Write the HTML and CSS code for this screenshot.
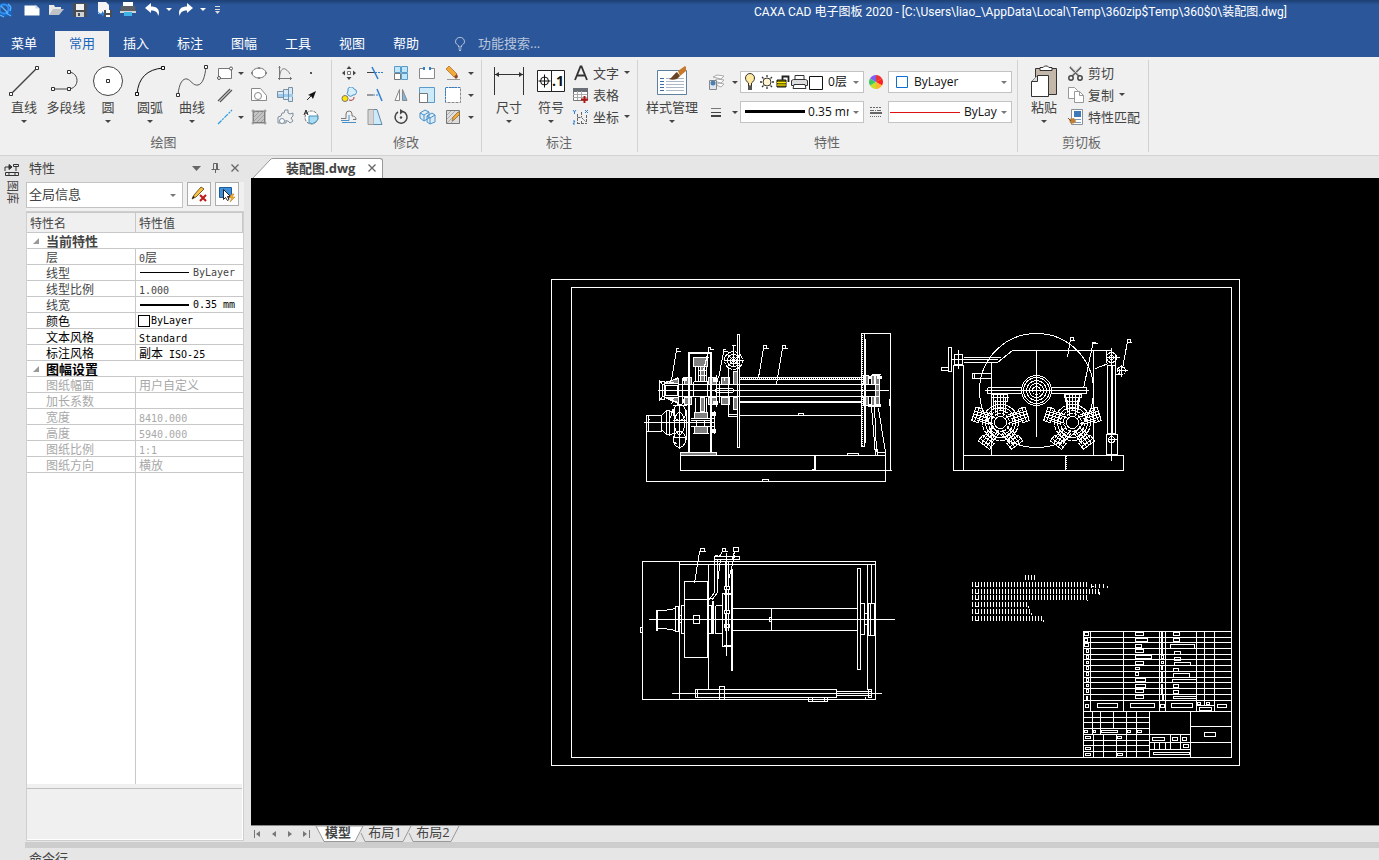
FILE: index.html
```html
<!DOCTYPE html>
<html lang="zh-CN">
<head>
  <meta charset="UTF-8">
  <title>CAXA CAD 电子图板 2020</title>
  <link rel="stylesheet" href="styles.css">
</head>
<body>

  <header class="header">
    <div class="titlebar">
      <svg class="logo" width="14" height="18" viewBox="0 0 14 18"><path d="M0 3l4-1 5 2 3 4-1 4 2 3-4-2-3 3-3-1-3-3z" fill="#1667c9"/><circle cx="4" cy="8" r="4.500" fill="#2b579a" stroke="#2f8fee" stroke-width="2"/><path d="M1 5l7 7M6 12l5 3M8 3l3 3M0 14l4 2M11 6l-1 4" stroke="#58b4ff" stroke-width="1.300"/></svg>
      <button class="qat" aria-label="新建"><svg width="16" height="14" viewBox="0 0 16 14"><path d="M.5 2.500h11l4 3v7H.5z" fill="#fff"/><path d="M11.500 1.500v4h4z" fill="#ccd3de"/></svg></button>
      <button class="qat" aria-label="打开"><svg width="16" height="14" viewBox="0 0 16 14"><path d="M1 12V2h5l1 2h6v3" fill="#e8e8e8"/><path d="M1 12l4-6h11l-5 6z" fill="#bfc3c8"/></svg></button>
      <button class="qat" aria-label="保存"><svg width="14" height="14" viewBox="0 0 14 14"><path d="M0 0h14v14H1l-1-1z" fill="#4a4d52"/><path d="M3 1h8v6H3z" fill="#f2f2f2"/><path d="M3 9h8v5H3z" fill="#d0d3d6"/><path d="M5 10h2v3H5z" fill="#4a4d52"/></svg></button>
      <button class="qat" aria-label="另存为"><svg width="15" height="15" viewBox="0 0 15 15"><path d="M1 0h8l3 3v9H1z" fill="#f4f4f4"/><path d="M0 8c2 3 3 4 5 3v-2l3 3-3 3v-2C2 13 1 11 0 8z" fill="#2b7cd3"/><path d="M7 8h8v7H7z" fill="#4a4d52"/><path d="M9 8h4v3H9zM9 13h4v2H9z" fill="#fff"/></svg></button>
      <button class="qat" aria-label="打印"><svg width="16" height="15" viewBox="0 0 16 15"><path d="M3 0h10v4H3z" fill="#fff"/><path d="M1 4h14l1 6H0z" fill="#5c5f64"/><path d="M0 9h16v2H0z" fill="#d5d5d5"/><path d="M4 10h8v4H4z" fill="#3fb4e6"/></svg></button>
      <button class="qat" aria-label="撤销"><svg width="14" height="13" viewBox="0 0 14 13"><path d="M0 5l6-5v3.500c5 0 8 2 8 6.500 0 1-.5 2-1 3 0-4-3-5.500-7-5.500V10z" fill="#fff"/></svg></button>
      <span class="caret light"></span>
      <button class="qat" aria-label="恢复"><svg width="14" height="13" viewBox="0 0 14 13"><path d="M14 5L8 0v3.500C3 3.500 0 5.500 0 10c0 1 .5 2 1 3 0-4 3-5.500 7-5.500V10z" fill="#fff"/></svg></button>
      <span class="caret light"></span>
      <button class="qat more" aria-label="自定义"><svg width="7" height="8" viewBox="0 0 7 8"><path d="M1 .5h5M1 3.500h5" stroke="#ddd"/><path d="M1 5h5L3.500 8z" fill="#ddd"/></svg></button>
      <div class="title">CAXA CAD 电子图板 2020 - [C:\Users\liao_\AppData\Local\Temp\360zip$Temp\360$0\装配图.dwg]</div>
    </div>
    <nav class="tabs">
      <button class="tab menu">菜单</button>
      <button class="tab active">常用</button>
      <button class="tab">插入</button>
      <button class="tab">标注</button>
      <button class="tab">图幅</button>
      <button class="tab">工具</button>
      <button class="tab">视图</button>
      <button class="tab">帮助</button>
      <label class="search">
        <svg width="10" height="14" viewBox="0 0 10 14" fill="none" stroke="#b9c6dc"><path d="M3.500 10V8.500C2 7.500.5 6.500.5 4.800a4.300 4.300 0 0 1 9 0C9.500 6.500 8 7.500 6.500 8.500V10z"/><path d="M3.500 12h3M4 13.500h2"/></svg>
        <input type="text" placeholder="功能搜索..." aria-label="功能搜索">
      </label>
    </nav>
  </header>

  <div class="ribbon">
    <section class="group draw">
      <div class="tools">
        <button class="big"><svg width="32" height="34" viewBox="0 0 32 34"><path d="M3 30L29 4" stroke="#444" stroke-width="1.500"/><path d="M1.500 28.500h3v3h-3zM27.500 2.500h3v3h-3z" fill="#fff" stroke="#333"/></svg>直线<span class="caret"></span></button>
        <button class="big"><svg width="32" height="34" viewBox="0 0 32 34"><path d="M3 25h15c12 0 12-17 0-17" fill="none" stroke="#444"/><path d="M1.500 23.500h3v3h-3zM17.500 23.500h3v3h-3zM17.500 6.500h3v3h-3z" fill="#fff" stroke="#333"/></svg>多段线</button>
        <button class="big"><svg width="32" height="34" viewBox="0 0 32 34"><circle cx="16" cy="17" r="14.500" fill="#fff" stroke="#444"/><path d="M14.500 15.500h3v3h-3z" fill="#fff" stroke="#333"/></svg>圆<span class="caret"></span></button>
        <button class="big"><svg width="32" height="34" viewBox="0 0 32 34"><path d="M3 30Q5 6 29 4" fill="none" stroke="#111"/><path d="M1.500 28.500h3v3h-3zM27.500 2.500h3v3h-3z" fill="#fff" stroke="#111"/></svg>圆弧<span class="caret"></span></button>
        <button class="big"><svg width="32" height="34" viewBox="0 0 32 34"><path d="M2 31C3 19 7 14 11 15s6 7 11 6 7-9 8-18" fill="none" stroke="#555"/><path d="M.5 29.500h3v3h-3zM28.500 1.500h3v3h-3z" fill="#fff" stroke="#333"/></svg>曲线<span class="caret"></span></button>
        <div class="small-grid">
          <button class="ico" aria-label="矩形"><svg width="16" height="16" viewBox="0 0 16 16"><path d="M1.500 3.500h13v10h-13z" fill="#fff" stroke="#777"/><circle cx="14" cy="3.500" r="1.500" fill="#fff" stroke="#555"/><circle cx="2" cy="13" r="1.500" fill="#fff" stroke="#555"/></svg></button><span class="caret"></span>
          <button class="ico" aria-label="椭圆"><svg width="16" height="16" viewBox="0 0 16 16"><ellipse cx="8" cy="8" rx="7" ry="5" fill="#fff" stroke="#777"/><path d="M7 2h2v2H7zM7 12h2v2H7zM0 7h2v2H0zM14 7h2v2h-2z" fill="#888"/></svg></button>
          <button class="ico" aria-label="公式曲线"><svg width="16" height="16" viewBox="0 0 16 16"><path d="M2.500 1v14M1 13.500h14M2.500 13C3 2 8 1 13 9M1.500 2.500h2M13.500 12v3" fill="none" stroke="#777"/></svg></button>
          <button class="ico" aria-label="点"><svg width="16" height="16" viewBox="0 0 16 16"><path d="M7 7h2v2H7z" fill="#555"/></svg></button>

          <button class="ico" aria-label="平行线"><svg width="16" height="16" viewBox="0 0 16 16"><path d="M1 14L13 2M3 15L15 3" stroke="#555" stroke-width="1.300"/></svg></button><span></span>
          <button class="ico" aria-label="多边形"><svg width="16" height="16" viewBox="0 0 16 16"><path d="M.5 1.500h9l6 7v5H.5z" fill="#fff" stroke="#888"/><circle cx="7" cy="9" r="3.500" fill="#fff" stroke="#888"/></svg></button>
          <button class="ico" aria-label="孔轴"><svg width="17" height="16" viewBox="0 0 17 16"><path d="M.5 4.500h6v-2h5v-2h4v14h-4v-2h-5v-2h-6z" fill="#d4eafa" stroke="#7a8f9f"/><path d="M1 7h15v3H1z" fill="#9ccbee"/><path d="M6.500 3v9M11.500 2v12" stroke="#7a8f9f"/></svg></button>
          <button class="ico" aria-label="箭头"><svg width="16" height="16" viewBox="0 0 16 16"><path d="M4 13l5-5" stroke="#222"/><path d="M13 4l-3 8-2-3-3-1z" fill="#111"/></svg></button>

          <button class="ico" aria-label="中心线"><svg width="16" height="16" viewBox="0 0 16 16"><path d="M1 15L15 1" stroke="#2f9fe0" stroke-width="1.300" stroke-dasharray="5 1 2 1"/></svg></button><span class="caret"></span>
          <button class="ico" aria-label="填充"><svg width="16" height="16" viewBox="0 0 16 16"><path d="M2.500 2.500h11v11h-11z" fill="#c4c4c4" stroke="#777"/><path d="M2 5l3-3M2 9l7-7M2 13L13 2M6 13l7-7M10 13l3-3" stroke="#a0a0a0"/><path d="M.5 2h15M.5 14h15M2 .5v15M14 .5v15" stroke="#888"/></svg></button>
          <button class="ico" aria-label="齿轮"><svg width="17" height="16" viewBox="0 0 17 16"><path d="M5 4h2l1-3h3v3l2 1 3-1v3l-2 2 2 3-3 2-2-2H9M5 4L4 7 1 8v6h8v-3" fill="none" stroke="#7f8f9f"/><circle cx="5" cy="12" r="2.500" fill="#fff" stroke="#7f8f9f"/></svg></button>
          <button class="ico" aria-label="文字圆"><svg width="16" height="16" viewBox="0 0 16 16"><circle cx="8.500" cy="8.500" r="6.500" fill="#fff" stroke="#777" stroke-dasharray="3 1"/><path d="M6 7h9a6.500 6.500 0 0 1-9 7z" fill="#a9dcf5" stroke="#4a90b8"/><path d="M1 6l2-5 2 5M2 4h2" fill="none" stroke="#222"/></svg></button>
        </div>
      </div>
      <h2>绘图</h2>
    </section>

    <section class="group modify">
      <div class="tools">
        <div class="small-grid">
          <button class="ico" aria-label="平移"><svg width="16" height="16" viewBox="0 0 16 16"><path d="M8 1l2.500 3h-5zM8 15l2.500-3h-5zM1 8l3-2.500v5zM15 8l-3-2.500v5z" fill="#444"/><path d="M6.500 6.500h3v3h-3z" fill="#fff" stroke="#777"/></svg></button>
          <button class="ico" aria-label="裁剪"><svg width="16" height="16" viewBox="0 0 16 16"><path d="M0 7.500h8" stroke="#444"/><path d="M8 7.500h8" stroke="#2f7fd0" stroke-dasharray="2 1"/><path d="M5 2l6 12" stroke="#2f7fd0" stroke-width="1.500"/></svg></button>
          <button class="ico" aria-label="阵列"><svg width="16" height="16" viewBox="0 0 16 16"><path d="M1.500 1.500h6v6h-6zM8.500 1.500h6v6h-6zM8.500 8.500h6v6h-6z" fill="#bfe6fa" stroke="#5a9cc8"/><path d="M1.500 8.500h6v6h-6z" fill="#fff" stroke="#777"/></svg></button>
          <button class="ico" aria-label="打断"><svg width="16" height="16" viewBox="0 0 16 16"><path d="M5 3.500H.5v10h15v-10H11" fill="#fff" stroke="#888"/><path d="M4 2h2v3H4zM10 2h2v3h-2z" fill="#2f7fd0"/></svg></button>
          <button class="ico" aria-label="删除"><svg width="16" height="16" viewBox="0 0 16 16"><path d="M1 4l3-3 8 8-3 3z" fill="#f2a93b" stroke="#a8661a" stroke-width=".7"/><path d="M9 12l3-3 1 3-2 2z" fill="#8a4a2a"/><path d="M2 14.500h13" stroke="#999"/></svg></button>
          <span class="caret"></span>

          <button class="ico" aria-label="平移复制"><svg width="16" height="16" viewBox="0 0 16 16"><circle cx="4" cy="11.500" r="3" fill="#ffe600" stroke="#777"/><path d="M7 4a3 3 0 0 1 6-2 3 3 0 0 1-1 6 3 3 0 0 1-5-4z" fill="#d5effc" stroke="#4a90c8"/><path d="M8 13c3 1 5 0 5-3" fill="none" stroke="#a33"/></svg></button>
          <button class="ico" aria-label="延伸"><svg width="16" height="16" viewBox="0 0 16 16"><path d="M0 8h6" stroke="#444"/><path d="M6 8h6" stroke="#2f7fd0" stroke-dasharray="2 1"/><path d="M10 2l5 12" stroke="#2f7fd0" stroke-width="1.500"/></svg></button>
          <button class="ico" aria-label="镜像"><svg width="16" height="16" viewBox="0 0 16 16"><path d="M6.500 2.500v11h-4.500z" fill="#fff" stroke="#888"/><path d="M9.500 2.500v11h4.500z" fill="#7fb8e0" stroke="#888"/></svg></button>
          <button class="ico" aria-label="缩放"><svg width="16" height="16" viewBox="0 0 16 16"><path d="M.5.5h15v15H.5z" fill="#cdeafa" stroke="#5a9cc8"/><path d="M.5 6.500h8v9h-8z" fill="#fff" stroke="#777"/></svg></button>
          <button class="ico" aria-label="拉伸"><svg width="16" height="16" viewBox="0 0 16 16"><path d="M.5.5h15v15H.5z" fill="#fff" stroke="#888" stroke-dasharray="3 1"/><path d="M.5 15V.5h15" fill="none" stroke="#2f7fd0" stroke-dasharray="2 1"/></svg></button>
          <span class="caret"></span>

          <button class="ico" aria-label="等距线"><svg width="16" height="16" viewBox="0 0 16 16"><path d="M0 9.500h5V5a3 3 0 0 1 6 0v2c2 0 4 1 4 3v.5h-3" fill="none" stroke="#777"/><path d="M1 13.500h14M0 11.500h8V6" fill="none" stroke="#4a90c8"/></svg></button>
          <button class="ico" aria-label="拉长"><svg width="16" height="16" viewBox="0 0 16 16"><path d="M1 .5h6v15H1z" fill="#d5d5d5" stroke="#999"/><path d="M7 .5h3l5 15H7" fill="#cdeafa" stroke="#5f88a8"/></svg></button>
          <button class="ico" aria-label="旋转"><svg width="16" height="16" viewBox="0 0 16 16"><path d="M10 2.500A6 6 0 1 1 5 3" fill="none" stroke="#444" stroke-width="1.500"/><path d="M7 0l4 2.500-4 3z" fill="#444"/><circle cx="8" cy="8.500" r="1.200" fill="#444"/></svg></button>
          <button class="ico" aria-label="分解"><svg width="17" height="16" viewBox="0 0 17 16"><path d="M1 4l5-3 4 2v6l-5 3-4-3zM1 4l4 2 5-3M5 6v6M8 7l5-3 3 2v7l-5 2-3-2zM8 7l3 2 5-3M11 9v6" fill="#cdeafa" fill-opacity=".6" stroke="#4a90c8"/></svg></button>
          <button class="ico" aria-label="编辑填充"><svg width="16" height="16" viewBox="0 0 16 16"><path d="M1.500 1.500h13v13h-13z" fill="#ddd" stroke="#777"/><path d="M2 6l4-4M2 10l8-8M2 14L14 2M6 14l8-8" stroke="#aaa"/><path d="M7 12l1-4 5-5 2 2-5 5z" fill="#f2a93b" stroke="#8a5a1a" stroke-width=".6"/></svg></button>
          <span class="caret"></span>
        </div>
      </div>
      <h2>修改</h2>
    </section>

    <section class="group annotate">
      <div class="tools">
        <button class="big"><svg width="32" height="34" viewBox="0 0 32 34"><path d="M1.500 3v28M30.500 3v28M2 10.500h28" stroke="#333"/><path d="M2 10.500l4-2.500v5zM30 10.500L26 8v5z" fill="#333"/></svg>尺寸<span class="caret"></span></button>
        <button class="big"><svg width="30" height="34" viewBox="0 0 30 34"><path d="M1.500 6.500h27v21h-27zM15.500 6v21" fill="#fff" stroke="#222"/><circle cx="8.500" cy="17" r="4" fill="none" stroke="#111"/><path d="M8.500 10.500v13M2.500 17h12" stroke="#111"/><text x="16" y="22" class="sym">.1</text></svg>符号<span class="caret"></span></button>
        <div class="list">
          <button class="row"><svg width="18" height="16" viewBox="0 0 18 16"><path d="M3 15L8.500 1.500h1L15 15M5 10.500h8" fill="none" stroke="#333" stroke-width="1.800"/></svg>文字<span class="caret"></span></button>
          <button class="row"><svg width="18" height="16" viewBox="0 0 18 16"><path d="M1.500 1.500h14v12h-14z" fill="#fff" stroke="#777"/><path d="M1 1h15v4H1z" fill="#6a6f76"/><path d="M1 7.500h14M1 10.500h14M5.500 4v9M9.500 4v9" stroke="#aaa"/><path d="M12.500 9v7M9 12.500h7" stroke="#b01818" stroke-width="2"/></svg>表格</button>
          <button class="row"><svg width="18" height="16" viewBox="0 0 18 16"><path d="M5.500 5v10M5.500 8.500h4l4 4M9.500 3v5M5 14.500h10M14.500 6v8M9.500 12v3" fill="none" stroke="#666" stroke-dasharray="3 1"/><path d="M1 1l1.500 2L4 1M2.500 3v2M13 1l3 3m0-3l-3 3M1 12h2l-2 3h2" fill="none" stroke="#2f7fd0"/></svg>坐标<span class="caret"></span></button>
        </div>
      </div>
      <h2>标注</h2>
    </section>

    <section class="group props">
      <div class="tools">
        <button class="big wide"><svg width="32" height="34" viewBox="0 0 32 34"><path d="M1.500 6.500h29v24h-29z" fill="#fff" stroke="#5f7f9f"/><path d="M4 14.500h4M4 17.500h4M4 20.500h4M4 23.500h4M4 26.500h4" stroke="#3a6ea5"/><path d="M10 14.500h18M10 17.500h18M10 20.500h18M10 23.500h18M10 26.500h18" stroke="#aab8c8"/><path d="M22 7l7-5 1 1v4l-6 5z" fill="#c67a2a"/><path d="M21 8l3 4-3 3c-3 1-6 1-8 0 3-1 4-4 8-7z" fill="#6b4226"/></svg>样式管理<span class="caret"></span></button>
        <div class="prop-grid">
          <button class="ico" aria-label="图层"><svg width="17" height="16" viewBox="0 0 17 16"><path d="M5 3l4-2 7 1-3 3zM6 7l3-2 7 1-3 3zM8 11l3-2 5 1-3 3z" fill="#fff" stroke="#aaa"/><path d="M1.500 6.500h7v9h-7z" fill="#dde6ee" stroke="#888"/><circle cx="5" cy="9" r="2.500" fill="#4a7fb0"/></svg></button>
          <span class="caret"></span>
          <div class="combo">
            <svg width="84" height="20" viewBox="0 0 84 20">
              <path d="M7.500 14v-3C5.500 9.500 4.500 8 4.500 6a4.500 4.500 0 0 1 9 0c0 2-1 3.500-3 5v3z" fill="#ffe9a0" stroke="#333"/><path d="M7 14h4v4H7z" fill="#555"/>
              <circle cx="26" cy="10" r="4" fill="#fff3d0" stroke="#333"/><path d="M26 3v2M26 15v2M19 10h2M31 10h2M21 5l1.500 1.500M29.500 13.500L31 15M31 5l-1.500 1.500M22.500 13.500L21 15" stroke="#333" stroke-width="1.300"/>
              <path d="M36 8h9v7h-9z" fill="#777000" stroke="#111"/><path d="M41.500 8V4.500h6V10" fill="none" stroke="#222" stroke-width="1.800"/><path d="M36 10.500h9M36 13h9" stroke="#ffe600"/>
              <path d="M54 3.500h9v4h-9z" fill="#fff" stroke="#333"/><path d="M50.500 8.500l2-1h12l2 1v5h-16z" fill="#ddd" stroke="#333"/><path d="M53 12.500h11l1 4H52z" fill="#fff" stroke="#333"/>
              <path d="M68.500 4.500h13v13h-13z" fill="#fff" stroke="#111"/>
            </svg>
            <select aria-label="图层"><option>0层</option></select><span class="caret"></span>
          </div>
          <svg class="mid" width="14" height="14" viewBox="-7 -7 14 14"><path d="M0 0L0-7A7 7 0 0 1 6-3.500z" fill="#e33"/><path d="M0 0L6-3.500A7 7 0 0 1 6 3.500z" fill="#f22"/><path d="M0 0L6 3.500A7 7 0 0 1 0 7z" fill="#ffb52e"/><path d="M0 0V7A7 7 0 0 1-6 3.500z" fill="#c8e02a"/><path d="M0 0L-6 3.500A7 7 0 0 1-6-3.500z" fill="#3fc860"/><path d="M0 0L-6-3.500A7 7 0 0 1 0-7z" fill="#8060f0"/></svg>
          <div class="combo">
            <svg width="22" height="20" viewBox="0 0 22 20"><path d="M7.500 4.500h11v11h-11z" fill="#fff" stroke="#0a6fd0"/></svg>
            <select aria-label="颜色"><option>ByLayer</option></select><span class="caret"></span>
          </div>

          <button class="ico" aria-label="线宽"><svg width="16" height="16" viewBox="0 0 16 16"><path d="M3 4.500h10" stroke="#777"/><path d="M3 8.500h10" stroke="#444"/><path d="M3 12h10" stroke="#444" stroke-width="2"/></svg></button>
          <span class="caret"></span>
          <div class="combo">
            <svg width="64" height="20" viewBox="0 0 64 20"><path d="M4 9.500h60" stroke="#000" stroke-width="3"/></svg>
            <select aria-label="线宽"><option>0.35 mm</option></select><span class="caret"></span>
          </div>
          <svg class="mid" width="14" height="14" viewBox="0 0 14 14" stroke="#666"><path d="M1 2.500h12" stroke-dasharray="2 1"/><path d="M1 5.500h12" stroke-dasharray="4 1 1 1"/><path d="M1 8h12" stroke-width="2"/><path d="M1 11.500h12" stroke-dasharray="1 1"/></svg>
          <div class="combo">
            <svg width="72" height="20" viewBox="0 0 72 20"><path d="M1 10.500h70" stroke="#e01010"/></svg>
            <select aria-label="线型"><option>ByLayer</option></select><span class="caret"></span>
          </div>
        </div>
      </div>
      <h2>特性</h2>
    </section>

    <section class="group clip">
      <div class="tools">
        <button class="big"><svg width="28" height="34" viewBox="0 0 28 34"><path d="M5.500 4.500h21v26h-21z" fill="#c2b7a8" stroke="#333"/><path d="M10 6.500v-3h3c1-2 5-2 6 0h3v3z" fill="#fff" stroke="#333"/><path d="M1.500 17.500l6-6h11v21h-17z" fill="#fff" stroke="#333"/><path d="M1.500 17.500h6v-6" fill="#ddd" stroke="#333"/></svg>粘贴<span class="caret"></span></button>
        <div class="list">
          <button class="row"><svg width="18" height="16" viewBox="0 0 18 16"><path d="M3 2l9 9M14 2l-9 9" stroke="#666" stroke-width="2"/><path d="M4 2l8 8M13 2l-8 8" stroke="#eee" stroke-width=".6"/><circle cx="4" cy="13" r="2.200" fill="none" stroke="#444" stroke-width="1.500"/><circle cx="13" cy="13" r="2.200" fill="none" stroke="#444" stroke-width="1.500"/></svg>剪切</button>
          <button class="row"><svg width="18" height="16" viewBox="0 0 18 16"><path d="M1.500.5h6l3 3v8h-9z" fill="#fff" stroke="#999"/><path d="M7.500 4.500h5l4 4v7h-9z" fill="#fff" stroke="#999"/><path d="M12.500 4.500v4h4" fill="none" stroke="#999"/></svg>复制<span class="caret"></span></button>
          <button class="row"><svg width="18" height="16" viewBox="0 0 18 16"><path d="M4.500.5h11v15h-11z" fill="#fff" stroke="#8a9099"/><path d="M7 2h7v6H7z" fill="#3f7ab8"/><path d="M8 10.500h6M8 13.500h6" stroke="#7a9abf"/><path d="M2 10l5-1 2 3c-1 3-4 3-6 2z" fill="#c08038"/><path d="M1 9l3 3" stroke="#653"/></svg>特性匹配</button>
        </div>
      </div>
      <h2>剪切板</h2>
    </section>
  </div>

  <div class="workspace">
    <aside class="rail">
      <button class="rail-tab">
        <svg width="16" height="14" viewBox="0 0 16 14" fill="none" stroke="#333"><path d="M1 8V4h5"/><path d="M5 1.500v5L8 4z" fill="#333"/><path d="M9.500 1.500h5v2h-5zM12 4v4"/><path d="M1.500 9.500h13v3h-13zM4 11h2M10 11h2"/></svg>
        <span>图库</span>
      </button>
    </aside>

    <div class="main">
      <div class="panes">
        <aside class="panel">
          <div class="panel-head">
            <span class="name">特性</span>
            <button aria-label="菜单"><svg width="9" height="6" viewBox="0 0 9 6"><path d="M0 1h9L4.500 6z" fill="#666"/></svg></button>
            <button aria-label="固定"><svg width="9" height="10" viewBox="0 0 9 10" fill="none" stroke="#666"><path d="M2.500 6V.5h4V6M5.500 1v5M.5 6.500h8M4.500 7v3"/></svg></button>
            <button aria-label="关闭"><svg width="8" height="8" viewBox="0 0 8 8"><path d="M.5.5l7 7M7.500.5l-7 7" stroke="#666" stroke-width="1.300"/></svg></button>
          </div>
          <div class="panel-pick">
            <div class="combo">
              <select aria-label="对象"><option>全局信息</option></select><span class="caret"></span>
            </div>
            <button class="sq" aria-label="清除"><svg width="16" height="16" viewBox="0 0 16 16"><path d="M1 13l2-4 7-8 3 2-8 8z" fill="#f6c445" stroke="#5a3a10" stroke-width=".8"/><path d="M1 13l1-3 2 1z" fill="#222"/><path d="M9 9l6 6M15 9l-6 6" stroke="#c01818" stroke-width="2"/></svg></button>
            <button class="sq" aria-label="快速选择"><svg width="16" height="16" viewBox="0 0 16 16"><path d="M.5 1.500h12v10H.5z" fill="#3f8fd8" stroke="#1d5c9c"/><path d="M4.500 3.500v10l2-2 2 3 1.500-1-1.500-3h3z" fill="#fff" stroke="#222"/><path d="M13 8l-3 4h3l-2 4 5-5h-3l2-3z" fill="#ffb52e" stroke="#b56a00" stroke-width=".5"/></svg></button>
          </div>
          <div class="sheet">
            <table>
              <thead><tr><th>特性名</th><th>特性值</th></tr></thead>
              <tbody>
                <tr class="cat"><td colspan="2"><span class="fold"></span>当前特性</td></tr>
                <tr><td>层</td><td><span class="lat">0</span>层</td></tr>
                <tr><td>线型</td><td><div class="line-value"><i class="thin"></i><span class="lat">ByLayer</span></div></td></tr>
                <tr><td>线型比例</td><td><span class="lat">1.000</span></td></tr>
                <tr><td>线宽</td><td class="on"><div class="line-value"><i class="thick"></i><span class="lat">0.35 mm</span></div></td></tr>
                <tr class="on"><td>颜色</td><td><div class="color-value"><i></i><span class="lat">ByLayer</span></div></td></tr>
                <tr class="on"><td>文本风格</td><td><span class="lat">Standard</span></td></tr>
                <tr class="on"><td>标注风格</td><td>副本<span class="lat"> ISO-25</span></td></tr>
                <tr class="cat on"><td colspan="2"><span class="fold"></span>图幅设置</td></tr>
                <tr class="off"><td>图纸幅面</td><td>用户自定义</td></tr>
                <tr class="off"><td>加长系数</td><td></td></tr>
                <tr class="off"><td>宽度</td><td><span class="lat">8410.000</span></td></tr>
                <tr class="off"><td>高度</td><td><span class="lat">5940.000</span></td></tr>
                <tr class="off"><td>图纸比例</td><td><span class="lat">1:1</span></td></tr>
                <tr class="off"><td>图纸方向</td><td>横放</td></tr>
              </tbody>
            </table>
            <div class="blank"></div>
            <div class="hint"></div>
          </div>
        </aside>

        <main class="doc">
          <div class="doc-tabs">
            <svg width="20" height="20" viewBox="0 0 20 20"><path d="M0 20L17 2Q18 .5 20 .5V20z" fill="#fff"/><path d="M0 20L17 2Q18 .5 20 .5" fill="none" stroke="#999"/></svg>
            <div class="doc-tab"><span>装配图.dwg</span><button aria-label="关闭文档"><svg width="8" height="8" viewBox="0 0 8 8"><path d="M.5.5l7 7M7.500.5l-7 7" stroke="#666" stroke-width="1.300"/></svg></button></div>
          </div>

          <div class="canvas">
            <svg viewBox="251 178 1128 647">
              <defs>
                <pattern id="hatch" width="2" height="2" patternUnits="userSpaceOnUse"><path d="M0 0h1v1H0zM1 1h1v1H1z" fill="#fff" stroke="none"/></pattern>
                <!-- one cylinder of the radial motor, pointing up -->
                <g id="arm"><path d="M-5-10v-13M5-10v-13M-7-21h14v-7H-7zM-3-7v-21M0-12v-16M3-7v-21M-6-14h12M-5-18h10M-8-25h16"/></g>
                <g id="motor"><circle r="18" stroke-dasharray="5 1"/><circle r="15"/><circle r="12" stroke-dasharray="4 1"/><circle r="9" stroke-dasharray="3 1"/><circle r="6"/>
                  <use href="#arm"/><use href="#arm" transform="rotate(72)"/><use href="#arm" transform="rotate(144)"/><use href="#arm" transform="rotate(216)"/><use href="#arm" transform="rotate(288)"/></g>
              </defs>
              <g transform="translate(.5 .5)" fill="none" stroke="#fff" shape-rendering="crispEdges">
                <!-- sheet frame -->
                <path d="M551 279h688v486H551zM571 287h660v470H571z"/>

                <!-- front view: base and dimensions -->
                <path d="M680 455h205v15H680zM885 470h6M646 422v59h239V452M762 481v-2h6v2M890 470V333h-29M889 398v7M847 455v-2h11v2M814 455v15h1V455M811 469h3"/>
                <path d="M680 452h36v3h-36z" fill="url(#hatch)"/>
                <!-- drum and shaft -->
                <path d="M737 334h2v113h-2zM861 333h3v113h-3zM865 338v104M739 377h122M739 379h122M739 401h122M739 402h122M739 415h122M798 415v-2h5v2M678 384h201M678 396h201M657 390h231"/>
                <path d="M740 378h121" stroke-dasharray="1 1"/>
                <path d="M862 334v111" stroke-dasharray="1 1"/>
                <path d="M728 366v50h9M728 414h9"/>
                <rect x="715" y="388" width="18" height="4" rx="2"/>
                <!-- housing -->
                <path d="M688 452V352h23v100M689 452V353h21v99"/>
                <g fill="url(#hatch)">
                  <path d="M693 357h14v9h-14zM700 366h4v15h-4zM700 397h4v14h-4zM694 412h13v6h-13zM694 426h13v7h-13zM693 381h14M693 396h14"/>
                  <path d="M684 377h7v7h-7zM684 397h7v7h-7zM708 377h8v7h-8zM708 397h8v7h-8zM721 377h8v7h-8zM721 397h8v7h-8zM733 371h4v13h-4zM733 397h4v12h-4z"/>
                  <path d="M863 375h5v9h-5zM863 396h5v9h-5zM871 375h3v9h-3zM871 396h3v9h-3zM875 375h4v30h-4z"/>
                </g>
                <path d="M695 365v16M706 365v16M695 397v15M706 397v15M693 381v15M707 381v15M692 357h16M692 433h16M698 366v15M698 370h8M698 375h8M696 419v6M704 419v6"/>
                <path d="M683 377h3v3h-3zM713 378h4v3h-4zM713 401h4v3h-4zM868 376h3v2h-3zM868 404h3v2h-3zM877 376h4v2h-4zM876 404h4v2h-4zM711 412h4v3h-4zM711 429h4v3h-4z" fill="#fff"/>
                <path d="M711 408v26M714 410v23M716 374v32M719 380v22M724 376v4M871 374h9M871 406h9"/>
                <!-- coupling -->
                <path d="M659 380v20M660 381h4v18h-4M662 384l16-7M662 396l16 7M662 384v12M665 385h12v10h-12zM678 377v26M682 377v26M659 380l3 4M659 400l3-4M669 382l8 1M669 398l8-1M665 390h13"/>
                <path d="M664 382l14-4v5h-14zM664 397h14v5z" fill="url(#hatch)"/>
                <!-- drive motor -->
                <path d="M643 422h71M646 415h15v16h-15zM648 415v16M649 419h-2M661 415l5-5v24l-5-5M666 410h3v24h-3zM669 410l5 3v19l-5 3M674 408v28M690 418h23M690 426h23M690 420h20"/>
                <ellipse cx="679" cy="412" rx="6" ry="8"/><ellipse cx="679" cy="439" rx="6" ry="8"/><ellipse cx="679" cy="423" rx="5" ry="11"/>
                <path d="M672 405h14M679 404v44M672 437h14M672 420h14M672 409l-2 9M686 409v30M671 404l2-7M684 404l-2-7M673 441l4 3"/>
                <!-- brake pulley -->
                <circle cx="733" cy="360" r="9" stroke-dasharray="3 1"/><circle cx="733" cy="360" r="6"/><circle cx="733" cy="360" r="3"/>
                <path d="M733 344v22M727 354l12 12M739 354l-12 12M731 345h4M724 360h19"/>
                <!-- right stand -->
                <path d="M871 406l4 49M874 406l2 46M878 408l7 44M876 452h9M873 449h4v6"/>
                <!-- leaders -->
                <path d="M671 380l5-30M676 351v-3h2M675 351h5M703 370l5-20M708 350v-3h2v2h3M718 378l5-26M723 352v-3h2M723 351h4M758 377l5-29v-3h3v3M762 348h6M776 384l6-36v-3h3v3M781 348h6"/>

                <!-- side view -->
                <circle cx="1036" cy="390" r="57"/>
                <circle cx="1036" cy="390" r="15"/><circle cx="1036" cy="390" r="13"/><circle cx="1036" cy="390" r="10"/><circle cx="1036" cy="390" r="7"/><circle cx="1036" cy="390" r="4"/>
                <path d="M1036 350v86M984 390h104M987 387h34v6h-34M987 387v6M1051 387h35v6h-35M991 455V362h-28M991 362h6l15-12h99M963 357h37M963 359h34M1093 350v105"/>
                <path d="M948 347h3v24h-3zM941 367h7v3h-7zM954 354h8v10h-8zM958 349v19M951 359h12M953 365h10v105h-10zM963 455h160v15H963M972 373h19v5h-19zM974 373v5M1065 455v15M1063 470h3"/>
                <path d="M1066 455v15" stroke-dasharray="1 1"/>
                <path d="M991 394h16v3h-16zM1064 394h17v3h-17zM993 397v12M1005 397v12M1066 397v12M1078 397v12"/>
                <use href="#motor" x="1000" y="422"/><use href="#motor" x="1072" y="422"/>
                <path d="M1107 365h8v68h-8zM1112 365v68M1106 434h11v20h-11zM1104 455h15M1111 347v113M1106 350v12M1115 355v10M1105 357h14M1095 368l13-5M1115 374h4v-6"/>
                <circle cx="1111" cy="357" r="5"/><circle cx="1111" cy="357" r="2"/><circle cx="1111" cy="439" r="3"/><circle cx="1121" cy="370" r="4"/>
                <path d="M1121 364v12M1116 370h11M1107 439h9"/>
                <path d="M1067 357l3-18v-2h3v3M1069 340h5M1083 388l9-43v-3h3M1091 343h6M1122 368l5-27v-2h3v3M1126 342h5"/>

                <!-- plan view -->
                <path d="M642 561h233v138H642zM679 561v138M679 564h196M708 564v125M867 564v125M871 564v39M642 627h-2v5h2"/>
                <path d="M684 581h23v76h-23zM684 599h23M693 615h6v8h-6zM648 619h246"/>
                <path d="M656 609v21M657 609v21M657 610h7l11-2M657 628h7l11 2M675 606h3v25h-3zM678 615h3M678 622h3M681 605h3v28h-3zM707 605h4v28h-4zM712 600v33M713 600v33M715 605h7v28h-7M715 605v28M722 593h10v53h-10zM723 645h8M723 594h8M726 552v103"/>
                <path d="M724 586h5v3h-5zM724 610h5v3h-5zM724 624h5v3h-5zM725 560v26M728 560v26M725 589v21M728 589v21M725 613v17M728 613v17"/>
                <path d="M731 568v102M732 568v102M732 608h125M732 630h125M771 608v22M771 617h-2v4h2M857 568h3v101h-3zM860 603h4v31h-4M864 613h4M864 624h4M868 603h6v32h-6zM870 603v32"/>
                <path d="M714 556h25v3h-25zM714 555h3M714 556v36l-6 8M717 559v33l-6 8M720 559l-3 23M709 598h4"/>
                <path d="M695 689h141v8H695zM697 689v8M671 693h210M719 686h5v13h-5zM836 691h34M836 695h34M868 689h3v8h-3zM865 696v3M808 697h19v4h-19zM812 697v4M824 697v4"/>
                <path d="M694 583l5-32M700 551v-3h4v3M698 551h7M719 556l3-5M722 551v-3h3v3M721 551h6M732 559l2-8M733 547h5v4h-5zM728 580l6-25"/>

                <!-- technical notes -->
                <g transform="translate(-.5 0)" stroke-width="5" stroke-dasharray="1 2">
                  <path d="M1025 577h10M972 584h116M972 591h127M972 597h115M972 604h56M972 611h59M972 618h70"/>
                </g>
                <path d="M1090 586h3M1091 583v4M1095 583v4M1099 583v4M1103 583v4M1107 585v2M1099 591v3M1087 599v1M1028 605v2M1031 612v2M1043 619v2M975 586h2M975 593h2M975 599h2M975 606h2M975 613h2M975 620h2"/>

                <!-- title block -->
                <path d="M1083 757V631h148M1083 637h148M1083 642h148M1083 648h148M1083 654h148M1083 659h148M1083 665h148M1083 671h148M1083 677h148M1083 682h148M1083 688h148M1083 694h148M1083 700h148M1083 711h148M1090 631v80M1123 631v80M1159 631v80M1165 631v80M1196 631v80M1204 631v74M1214 631v80M1196 705h18"/>
                <path d="M1083 717h66M1083 722h66M1083 728h66M1083 734h107M1083 740h66M1083 745h66M1083 751h66M1092 711v23M1100 711v23M1113 711v17M1126 711v46M1136 711v46M1093 734v23M1103 734v23M1116 734v23M1149 711v46M1190 711v46M1190 726h41M1149 742h82M1149 749h41M1170 734v15M1180 734v15M1154 742v7M1159 742v7M1165 742v7"/>
                <path d="M1084 632h4v3h-4zM1084 638h3v3h-3zM1084 643h4v3h-4zM1086 649h2v3h-2zM1086 655h2v3h-2zM1086 661h2v2h-2zM1086 666h2v3h-2zM1086 672h2v3h-2zM1086 678h2v3h-2zM1086 684h2v2h-2zM1086 689h2v3h-2zM1086 695v4M1087 695v4"/>
                <path d="M1135 632h8v3h-8zM1135 638h12v3h-12zM1135 644h6v3h-6zM1135 649h8v3h-8zM1135 655h16v3h-16zM1135 661h8v3h-8zM1135 667h4v2h-4zM1135 672h3v3h-3zM1135 678h10v3h-10zM1135 684h10v3h-10zM1135 689h8v3h-8zM1135 695h8v3h-8z"/>
                <path d="M1161 632h1v4h-1zM1161 638h1v4h-1zM1161 643h1v4h-1zM1161 649h1v4h-1zM1161 655h2v3h-2zM1161 661h2v2h-2zM1161 666h1v3h-1zM1161 672h1v4h-1zM1161 678h1v3h-1zM1161 684h1v3h-1zM1161 689h1v4h-1zM1162 695h1v4h-1z"/>
                <path d="M1173 632h6v3h-6zM1173 638h6v3h-6zM1170 648v-4h24v4M1174 654v-3h6v3M1174 657h6v3h-6zM1174 665v-3h16v3M1173 671v-3h5v3M1173 673h16v4h-16zM1172 682v-3h24M1173 684h5v3h-5zM1173 690h5v3h-5zM1196 696h-23v2h23"/>
                <path d="M1085 704h3v3h-3zM1097 703h20v4h-20zM1130 703h24v4h-24zM1160 704h4v3h-4zM1171 703h21v4h-21zM1197 702h3v2h-3zM1206 702h3v2h-3zM1199 707h12v3h-12zM1217 704h9v3h-9z"/>
                <path d="M1084 730h3v2h-3zM1093 730h2v2h-2zM1101 730h16v2h-16zM1127 730h3v2h-3zM1137 730h4v2h-4zM1085 736h5v2h-5zM1117 736h4v2h-4zM1085 747h5v2h-5zM1085 753h5v2h-5zM1117 753h5v2h-5zM1152 737h12v3h-12zM1172 737h5v3h-5zM1182 737h4v3h-4zM1183 744h5v3h-5zM1153 752h36v2h-36zM1204 732h11v4h-11z"/>
              </g>
            </svg>
          </div>

          <div class="sheets">
            <button class="nav" aria-label="第一个"><svg width="8" height="8" viewBox="0 0 8 8"><path d="M.5 0v8" stroke="#777"/><path d="M6 1v6L2 4z" fill="#777"/></svg></button>
            <button class="nav" aria-label="上一个"><svg width="8" height="8" viewBox="0 0 8 8"><path d="M6 1v6L2 4z" fill="#777"/></svg></button>
            <button class="nav" aria-label="下一个"><svg width="8" height="8" viewBox="0 0 8 8"><path d="M2 1v6l4-3z" fill="#777"/></svg></button>
            <button class="nav" aria-label="最后一个"><svg width="8" height="8" viewBox="0 0 8 8"><path d="M7.500 0v8" stroke="#777"/><path d="M1 1v6l4-3z" fill="#777"/></svg></button>
            <button class="sheet-tab active"><svg width="50" height="17" viewBox="0 0 50 17"><path d="M1 0l8 15.500h31L48 0z" fill="#fff" stroke="#999"/></svg><span>模型</span></button>
            <button class="sheet-tab"><svg width="50" height="17" viewBox="0 0 50 17"><path d="M-2 7l4 8.500h38L48 0" fill="none" stroke="#999"/></svg><span>布局1</span></button>
            <button class="sheet-tab"><svg width="50" height="17" viewBox="0 0 50 17"><path d="M-2 7l4 8.500h38L48 0" fill="none" stroke="#999"/></svg><span>布局2</span></button>
          </div>
        </main>
      </div>
      <div class="splitter"></div>
      <div class="command">命令行</div>
    </div>
  </div>

</body>
</html>
```
FILE: styles.css
```css
* { box-sizing: border-box; }
html, body { height: 100%; }
body { margin: 0; display: flex; flex-direction: column; overflow: hidden; background: #e6e6e6; color: #444; font: 13px/18px "Open Sans", "Noto Sans CJK SC", sans-serif; }
button, select, input { font: inherit; color: inherit; border: 0; background: none; padding: 0; margin: 0; }
svg { display: block; flex: none; }
h2 { margin: 0; font-size: 13px; font-weight: normal; color: #666; text-align: center; }
.caret { flex: none; justify-self: center; width: 0; height: 0; border: 3px solid transparent; border-top-color: #444; border-bottom: 0; }
.caret.light { border-top-color: #fff; margin: 0 2px; }

/* header */
.header { background: linear-gradient(#1d3f73, #2b579a 5px); color: #fff; }
.titlebar { display: flex; align-items: center; height: 31px; padding-bottom: 12px; }
.logo { margin-right: 6px; }
.qat { width: 24px; display: flex; justify-content: center; }
.qat.more { width: 18px; }
.title { margin-left: auto; padding: 5px 92px 0 0; font: 12px/18px Roboto, "Noto Sans CJK SC", sans-serif; white-space: nowrap; }
.tabs { display: flex; height: 26px; }
.tab { width: 54px; height: 26px; padding-bottom: 3px; }
.tab.menu { width: 48px; margin-right: 7px; }
.tab.active { background: #f0f0f0; color: #1a66b8; }
.search { display: flex; align-items: center; gap: 13px; margin-left: 22px; }
.search input { width: 120px; padding-bottom: 3px; color: #fff; outline: none; }
.search input::placeholder { color: #b9c6dc; opacity: 1; }

/* ribbon */
.ribbon { display: flex; flex: none; height: 99px; padding: 3px 0; background: #f0f0f0; border-bottom: 1px solid #d2d2d2; }
.group { display: flex; flex-direction: column; border-right: 1px solid #d2d2d2; padding-top: 2px; }
.group h2 { margin-top: auto; padding-bottom: 1px; }
.tools { display: flex; }
.draw { padding-left: 3px; padding-right: 7px; }
.modify { padding: 2px 5px 0 4px; }
.annotate { padding-left: 6px; padding-right: 7px; }
.props { padding-left: 4px; padding-right: 5px; }
.clip { padding-left: 5px; padding-right: 8px; }
.big { display: flex; flex-direction: column; align-items: center; width: 42px; padding-top: 2px; white-space: nowrap; }
.big.wide { width: 60px; }
.big .caret { margin-top: 4px; }
.sym { font: bold 14px "Open Sans", sans-serif; fill: #111; }
.small-grid { display: grid; grid-auto-rows: 22px; align-items: center; }
.draw .small-grid { grid-template-columns: 23px 10px 26px 26px 26px; }
.modify .small-grid { grid-template-columns: repeat(5, 26px) 10px; }
.ico { display: flex; justify-content: center; align-items: center; height: 22px; }
.list { display: flex; flex-direction: column; }
.clip .list { margin-left: 2px; }
.row { display: flex; align-items: center; gap: 3px; height: 22px; padding-bottom: 1px; white-space: nowrap; }
.row .caret { margin-left: 2px; }
.prop-grid { display: grid; grid-template-columns: 28px 10px 124px 24px 124px; grid-auto-rows: 22px; row-gap: 8px; align-items: center; padding-top: 9px; }
.mid { justify-self: center; }
.combo { display: flex; align-items: center; height: 22px; background: #fff; border: 1px solid #c3c3c3; color: #111; overflow: hidden; }
.combo select { appearance: none; flex: 1; width: 0; min-width: 0; height: 20px; padding-left: 2px; outline: none; }
.combo .caret { margin: 0 4px; border-top-color: #777; }
.prop-grid select { font-size: 12px; padding-left: 3px; }

/* workspace */
.workspace { flex: 1; min-height: 0; display: flex; }
.rail { width: 25px; flex: none; padding: 7px 0 0 4px; }
.rail-tab { display: flex; flex-direction: column; align-items: center; gap: 3px; }
.rail-tab span { writing-mode: vertical-rl; text-orientation: sideways; font-size: 12px; line-height: 14px; }
.main { flex: 1; min-width: 0; display: flex; flex-direction: column; }
.panes { flex: 1; min-height: 0; display: flex; }
.splitter { flex: none; height: 6px; background: #cdcdcd; }
.command { flex: none; height: 12px; padding: 1px 4px 0; overflow: hidden; }

/* property panel */
.panel { width: 219px; flex: none; display: flex; flex-direction: column; padding-left: 1px; padding-bottom: 1px; }
.panel-head { display: flex; align-items: center; height: 26px; padding: 0 0 2px 3px; }
.panel-head .name { flex: 1; }
.panel-head button { width: 19px; display: flex; justify-content: center; }
.panel-pick { display: flex; gap: 4px; height: 29px; padding-right: 5px; background: #f0f0f0; }
.panel-pick .combo { flex: 1; height: 26px; color: #444; }
.panel-pick .combo select { padding-bottom: 2px; }
.panel-pick .combo .caret { margin-right: 6px; }
.sq { width: 24px; height: 24px; display: flex; align-items: center; justify-content: center; border: 1px solid #adadad; background: #fdfdfd; }
.sheet { flex: 1; min-height: 0; display: flex; flex-direction: column; border: 1px solid #cfcfcf; background: #fff; font: 12px/15px "Noto Sans CJK SC", sans-serif; }
.sheet table { width: 100%; border-collapse: separate; border-spacing: 0; table-layout: fixed; }
.sheet th { height: 21px; padding: 0 3px; text-align: left; font-weight: normal; background: #f0f0f0; border: 1px solid #c8c8c8; border-width: 1px 1px 1px 0; }
.sheet th:first-child, .sheet td:first-child { width: 109px; }
.sheet td { height: 16px; padding: 0 3px; vertical-align: top; border-bottom: 1px solid #c8c8c8; white-space: nowrap; }
.sheet td:first-child { padding-left: 19px; border-right: 1px solid #c8c8c8; }
.sheet .cat td { position: relative; border-right: 0; font-size: 13px; font-weight: bold; }
.fold { position: absolute; left: 6px; top: 5px; border: 3px solid #999; border-left-color: transparent; border-top-color: transparent; }
.lat { font: 10px/10px "DejaVu Sans Mono", monospace; white-space: pre; }
.on { color: #000; }
.off { color: #a8a8a8; }
.line-value, .color-value { display: flex; align-items: center; gap: 4px; height: 15px; }
.line-value i { width: 49px; height: 1px; margin-left: 1px; background: #000; }
.line-value i.thick { height: 2px; }
.color-value { gap: 1px; }
.color-value i { width: 12px; height: 12px; margin-left: -1px; border: 1px solid #000; background: #fff; }
.blank { flex: 1; width: 109px; border-right: 1px solid #c8c8c8; }
.hint { height: 55px; margin: 0 1px 1px 0; background: #f0f0f0; border-top: 4px solid #f0f0f0; box-shadow: inset 0 1px #c0c0c0; }

/* document */
.doc { flex: 1; min-width: 0; display: flex; flex-direction: column; margin-left: 7px; }
.doc-tabs { display: flex; flex: none; height: 22px; padding: 2px 0 0 2px; }
.doc-tab { display: flex; align-items: center; gap: 13px; height: 20px; padding: 0 6px 1px 13px; background: #fff; border: 1px solid #999; border-width: 1px 1px 0 0; border-radius: 0 3px 0 0; font-weight: bold; font-size: 13px; }
.canvas { flex: 1; min-height: 0; background: #000; }
.canvas svg { width: 100%; height: 100%; }
.sheets { display: flex; align-items: center; flex: none; height: 17px; border-top: 1px solid #888; }
.nav { width: 16px; height: 16px; display: flex; align-items: center; justify-content: center; padding-right: 3px; }
.sheet-tab { position: relative; width: 48px; height: 16px; padding: 0 4px 3px 0; line-height: 13px; }
.sheet-tab svg { position: absolute; left: 0; top: 0; overflow: visible; }
.sheet-tab span { position: relative; }
.sheet-tab.active { padding-right: 2px; font-weight: bold; }
```
